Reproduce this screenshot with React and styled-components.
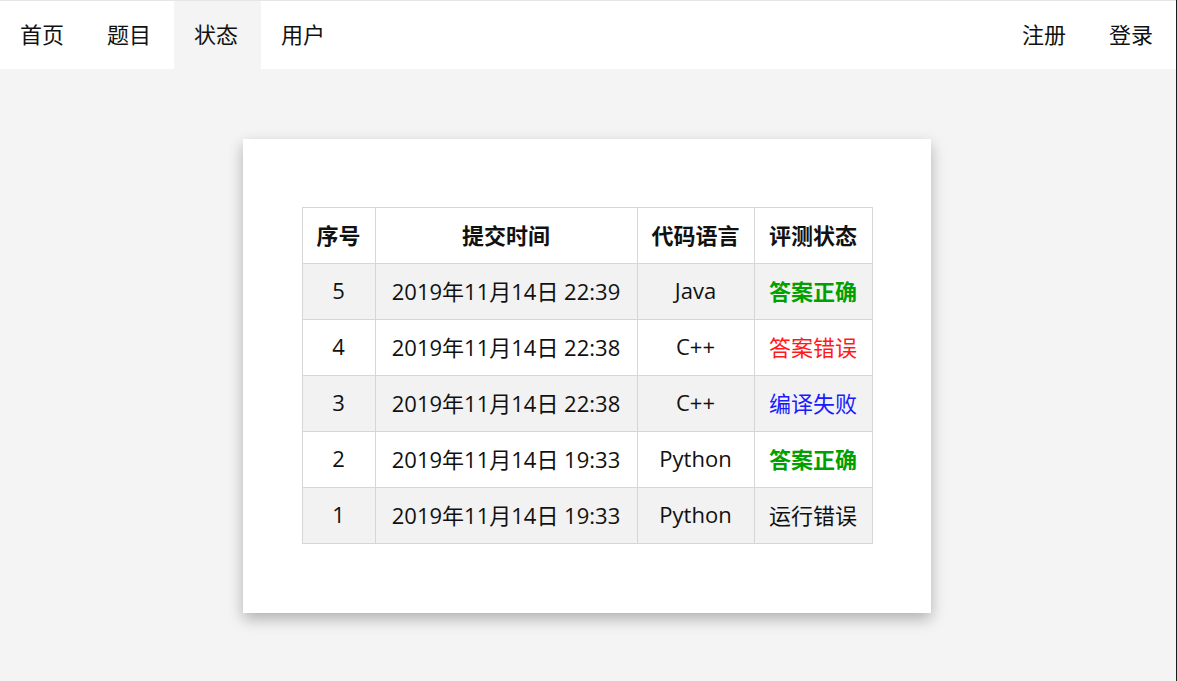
import React from "react";
import styled, { createGlobalStyle } from "styled-components";

const Global = createGlobalStyle`
  html, body { margin: 0; padding: 0; }
  html { border-right: 1px solid #1a1a1a; box-sizing: border-box; min-height: 100%; background: #f4f4f4; }
  body {
    background: #f4f4f4;
    font-family: "Open Sans", "Noto Sans CJK SC", sans-serif;
    color: #111;
    min-height: 681px;
  }
`;

const Nav = styled.nav`
  display: flex;
  justify-content: space-between;
  background: #fff;
  border-top: 1px solid #e6e6e6;
  height: 68px;
`;

const Group = styled.div`
  display: flex;
`;

const NavItem = styled.a`
  display: block;
  padding: 0 23px 4px 20px;
  font-family: "Noto Sans CJK SC", sans-serif;
  font-size: 22px;
  line-height: 64px;
  color: #111;
  text-decoration: none;
  background: ${(p) => (p.$active ? "#f4f4f4" : "transparent")};
`;

const Main = styled.main`
  display: flex;
  justify-content: center;
  padding: 70px 2px 0 0;
`;

const Card = styled.section`
  width: 688px;
  box-sizing: border-box;
  background: #fff;
  padding: 68px 0 69px;
  display: flex;
  justify-content: center;
  box-shadow: 0 6px 14px rgba(0, 0, 0, 0.28);
`;

const Table = styled.table`
  border-collapse: collapse;
  table-layout: fixed;
  width: 570px;
  font-size: 22px;
`;

const Th = styled.th`
  height: 52px;
  border: 1px solid #d6d6d6;
  font-family: "Noto Sans CJK SC", sans-serif;
  font-weight: 700;
  text-align: center;
  padding: 0 0 3px;
  background: #fff;
`;

const Row = styled.tr`
  background: ${(p) => (p.$striped ? "#f2f2f2" : "#fff")};
`;

const Td = styled.td`
  height: 52px;
  border: 1px solid #d6d6d6;
  text-align: center;
  padding: 0 0 3px;
  white-space: nowrap;
`;

const Status = styled.span`
  font-family: "Noto Sans CJK SC", sans-serif;
  color: ${(p) => p.$color};
  font-weight: ${(p) => (p.$bold ? 700 : 400)};
`;

const STATUS = {
  ok: { text: "答案正确", color: "#00a000", bold: true },
  wa: { text: "答案错误", color: "#ff1a1a", bold: false },
  ce: { text: "编译失败", color: "#1a1aff", bold: false },
  re: { text: "运行错误", color: "#111", bold: false },
};

const rows = [
  { id: 5, time: "2019年11月14日 22:39", lang: "Java", st: "ok" },
  { id: 4, time: "2019年11月14日 22:38", lang: "C++", st: "wa" },
  { id: 3, time: "2019年11月14日 22:38", lang: "C++", st: "ce" },
  { id: 2, time: "2019年11月14日 19:33", lang: "Python", st: "ok" },
  { id: 1, time: "2019年11月14日 19:33", lang: "Python", st: "re" },
];

export default function App() {
  return (
    <>
      <Global />
      <Nav>
        <Group>
          <NavItem>首页</NavItem>
          <NavItem>题目</NavItem>
          <NavItem $active>状态</NavItem>
          <NavItem>用户</NavItem>
        </Group>
        <Group>
          <NavItem>注册</NavItem>
          <NavItem>登录</NavItem>
        </Group>
      </Nav>
      <Main>
        <Card>
          <Table>
            <colgroup>
              <col style={{ width: 73 }} />
              <col style={{ width: 262 }} />
              <col style={{ width: 117 }} />
              <col style={{ width: 118 }} />
            </colgroup>
            <thead>
              <tr>
                <Th>序号</Th>
                <Th>提交时间</Th>
                <Th>代码语言</Th>
                <Th>评测状态</Th>
              </tr>
            </thead>
            <tbody>
              {rows.map((r, i) => {
                const s = STATUS[r.st];
                return (
                  <Row key={r.id} $striped={i % 2 === 0}>
                    <Td>{r.id}</Td>
                    <Td>{r.time}</Td>
                    <Td>{r.lang}</Td>
                    <Td>
                      <Status $color={s.color} $bold={s.bold}>{s.text}</Status>
                    </Td>
                  </Row>
                );
              })}
            </tbody>
          </Table>
        </Card>
      </Main>
    </>
  );
}
